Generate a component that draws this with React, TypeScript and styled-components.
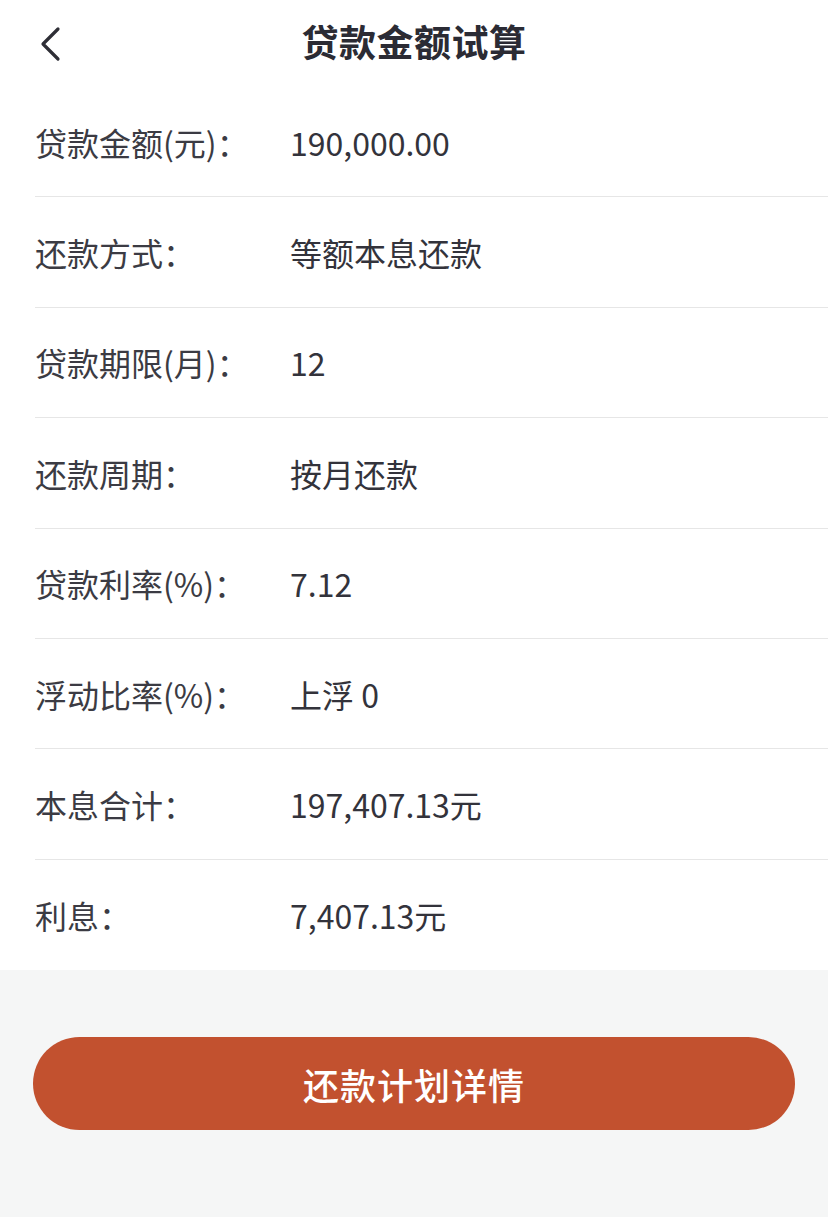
import styled, {createGlobalStyle} from "styled-components";

const GlobalStyle = createGlobalStyle`
  html, body {
    margin: 0;
    padding: 0;
    background: #f5f6f6;
  }
  body {
    font-family: "Noto Sans CJK SC", "Noto Sans", sans-serif;
    color: #33333b;
  }
`;

const rows = [
    {label: "贷款金额(元)：", value: "190,000.00"},
    {label: "还款方式：", value: "等额本息还款"},
    {label: "贷款期限(月)：", value: "12"},
    {label: "还款周期：", value: "按月还款"},
    {label: "贷款利率(%)：", value: "7.12"},
    {label: "浮动比率(%)：", value: "上浮 0"},
    {label: "本息合计：", value: "197,407.13元"},
    {label: "利息：", value: "7,407.13元"},
];

const Calculator = () => {
    return (
        <>
            <GlobalStyle/>
            <Page>
                <Header>
                    <BackButton aria-label="返回">
                        <svg width="26" height="36" viewBox="0 0 26 36" fill="none">
                            <path d="M20 3 L5 18 L20 33" stroke="#2e2e36" strokeWidth="3.2" strokeLinecap="round" strokeLinejoin="round"/>
                        </svg>
                    </BackButton>
                    <Title>贷款金额试算</Title>
                </Header>
                <List>
                    {rows.map((row) => (
                        <Row key={row.label}>
                            <Label>{row.label}</Label>
                            <Value>{row.value}</Value>
                        </Row>
                    ))}
                </List>
                <Footer>
                    <PlanButton>还款计划详情</PlanButton>
                </Footer>
            </Page>
        </>
    );
};

const Page = styled.div`
  width: 828px;
  min-height: 1217px;
  display: flex;
  flex-direction: column;
  background: #f5f6f6;
`;

const Header = styled.div`
  height: 87px;
  background: #fff;
  display: flex;
  align-items: center;
  justify-content: center;
  position: relative;
`;

const BackButton = styled.button`
  position: absolute;
  left: 38px;
  top: 26px;
  padding: 0;
  border: none;
  background: none;
  display: flex;
`;

const Title = styled.h1`
  margin: -6px 0 0 0;
  font-size: 37px;
  font-weight: 700;
  color: #2b2b34;
  letter-spacing: 0.5px;
`;

const List = styled.div`
  background: #fff;
  padding-left: 35px;
  padding-bottom: 0;
`;

const Row = styled.div`
  height: 110.4px;
  box-sizing: border-box;
  display: flex;
  align-items: center;
  border-bottom: 1.5px solid #e6e6e6;
  font-size: 32px;

  &:last-child {
    border-bottom: none;
  }
`;

const Label = styled.span`
  width: 255px;
  flex-shrink: 0;
  color: #3b3b43;
`;

const Value = styled.span`
  color: #33333b;
`;

const Footer = styled.div`
  flex: 1;
  padding: 67px 33px 0 33px;
`;

const PlanButton = styled.button`
  width: 100%;
  height: 93px;
  border: none;
  border-radius: 47px;
  background: #c2512f;
  color: #fff;
  font-family: "Noto Sans CJK SC", sans-serif;
  font-size: 36px;
  font-weight: 500;
  letter-spacing: 1px;
`;

export default Calculator;
